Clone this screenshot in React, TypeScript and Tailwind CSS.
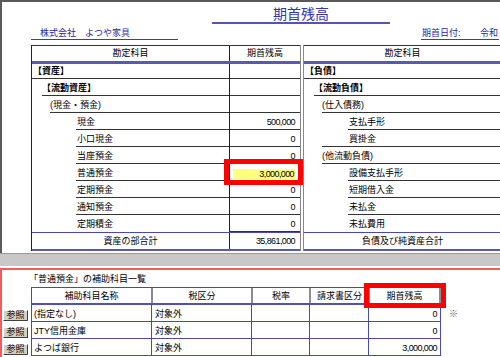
import React from "react";

type Line = { t: string; lvl: number; v?: string; bold?: boolean; hl?: boolean };

const assets: Line[] = [
    { t: "【資産】", lvl: 0, bold: true },
    { t: "【流動資産】", lvl: 1, bold: true },
    { t: "(現金・預金)", lvl: 2 },
    { t: "現金", lvl: 3, v: "500,000" },
    { t: "小口現金", lvl: 3, v: "0" },
    { t: "当座預金", lvl: 3, v: "0" },
    { t: "普通預金", lvl: 3, v: "3,000,000", hl: true },
    { t: "定期預金", lvl: 3, v: "0" },
    { t: "通知預金", lvl: 3, v: "0" },
    { t: "定期積金", lvl: 3, v: "0" },
];

const liabilities: Line[] = [
    { t: "【負債】", lvl: 0, bold: true },
    { t: "【流動負債】", lvl: 1, bold: true },
    { t: "(仕入債務)", lvl: 2 },
    { t: "支払手形", lvl: 3 },
    { t: "買掛金", lvl: 3 },
    { t: "(他流動負債)", lvl: 2 },
    { t: "設備支払手形", lvl: 3 },
    { t: "短期借入金", lvl: 3 },
    { t: "未払金", lvl: 3 },
    { t: "未払費用", lvl: 3 },
];

const textPad = ["pl-[1px]", "pl-[10px]", "pl-[18px]", "pl-[45px]"];
const linePad = ["ml-0", "ml-[10px]", "ml-[18px]", "ml-[44px]"];

const subRows = [
    { name: "(指定なし)", tax: "対象外", v: "0", mark: true },
    { name: "JTY信用金庫", tax: "対象外", v: "0" },
    { name: "よつば銀行", tax: "対象外", v: "3,000,000" },
];

const num = "font-['Liberation_Sans',sans-serif] tracking-[-0.6px]";

export default function App() {
    return (
        <div className="relative w-[500px] h-[357px] overflow-hidden bg-white text-black text-[9px] leading-[12px] font-['Liberation_Sans','Noto_Sans_CJK_JP',sans-serif]">
            <div className="h-[253px] border-l-2 border-t-2 border-[#5a5a5a] overflow-hidden">
                <div className="ml-[210px] mt-[3px] w-[178px] h-[19px] border-b-2 border-[#5454b4] text-center text-[14px] leading-[18px] text-[#3636a4]">
                    期首残高
                </div>

                <div className="flex mt-[3px] h-[13px] text-[#2828a0]">
                    <div className="ml-[29px] w-[147px] shrink-0 border-b border-[#3c3cb0] pl-[9px]">株式会社　よつや家具</div>
                    <div className="ml-[243px] w-[78px] shrink-0 flex border-b border-[#3c3cb0]">
                        <span className="w-[59px] shrink-0 pl-[1px]">期首日付:</span>
                        <span>令和</span>
                    </div>
                </div>

                <div className="flex mt-[5px] ml-[29px]">
                    <BalanceSide
                        rows={assets}
                        total="資産の部合計"
                        totalValue="35,861,000"
                        showAmount
                    />
                    <div className="w-[2px] shrink-0" />
                    <BalanceSide rows={liabilities} total="負債及び純資産合計" />
                </div>
            </div>

            <div className="h-[13px] bg-[#c8c8c8] border-t border-[#9a9a9a]" />

            <div className="mt-[2px] h-[89px] border-t-2 border-l-2 border-[#f25c5c]">
                <div className="mt-[3px] h-[12px] pl-[27px]">「普通預金」の補助科目一覧</div>
                <div className="mt-[2px] flex flex-col">
                    <div className="flex h-[18px]">
                        <div className="w-[29px] shrink-0" />
                        <div className="flex border-t border-b-2 border-[#4a4aa8] border-b-[#5050b8]">
                            <HeadCell w="w-[120px]" first>補助科目名称</HeadCell>
                            <HeadCell w="w-[100px]">税区分</HeadCell>
                            <HeadCell w="w-[58px]">税率</HeadCell>
                            <HeadCell w="w-[59px]">請求書区分</HeadCell>
                            <HeadCell w="w-[73px]" last>期首残高</HeadCell>
                        </div>
                    </div>
                    {subRows.map((r, i) => (
                        <div key={i} className="flex h-[17px]">
                            <div className="w-[29px] shrink-0 pl-[1px] pt-[5px]">
                                <div className="w-[25px] h-[11px] bg-[#d4d0c8] border border-t-white border-l-white border-b-[#404040] border-r-[#404040] text-center text-[9px] leading-[9px]">
                                    参照
                                </div>
                            </div>
                            <div className="flex border-b border-[#4a4aa8]">
                                <div className="w-[120px] border-l border-[#4a4aa8] pl-[2px] pt-[3px]">{r.name}</div>
                                <div className="w-[100px] border-l border-[#4a4aa8] pl-[3px] pt-[3px]">{r.tax}</div>
                                <div className="w-[58px] border-l border-[#4a4aa8]" />
                                <div className="w-[59px] border-l border-[#4a4aa8]" />
                                <div className={"w-[73px] border-x border-[#4a4aa8] pr-[3px] pt-[3px] text-right " + num}>{r.v}</div>
                            </div>
                            {r.mark && <div className="pl-[8px] pt-[3px] text-[#555]">※</div>}
                        </div>
                    ))}
                </div>
            </div>

            <div className="absolute left-[224px] top-[159px] w-[79px] h-[26px] border-[5px] border-[#ff0000]" />
            <div className="absolute left-[364px] top-[283px] w-[82px] h-[25px] border-[5px] border-[#ff0000]" />
        </div>
    );
}

function HeadCell({ children, w, first, last }: { children: React.ReactNode; w: string; first?: boolean; last?: boolean }) {
    return (
        <div
            className={
                "text-center pt-[2px] " +
                w +
                (first ? " border-l border-[#4a4aa8]" : " border-l-2 border-l-[#8a8a9a]") +
                (last ? " border-r-2 border-r-[#8a8a9a]" : "")
            }
        >
            {children}
        </div>
    );
}

function BalanceSide({
    rows,
    total,
    totalValue,
    showAmount,
}: {
    rows: Line[];
    total: string;
    totalValue?: string;
    showAmount?: boolean;
}) {
    return (
        <div className={"flex flex-col shrink-0 border-l " + (showAmount ? "border-[#222] border-r border-r-[#888]" : "border-[#888]")}>
            <div className="flex h-[19px] border-t border-[#333] border-b-[3px] border-b-[#5858b8]">
                <div className="w-[198px] text-center pt-[1px] border-r border-[#222]">勘定科目</div>
                <div className="w-[70px] text-center pt-[1px]">{showAmount ? "期首残高" : ""}</div>
            </div>

            {rows.map((r, i) => {
                const next = rows[i + 1];
                const lineLvl = next ? Math.min(r.lvl, next.lvl) : 0;
                return (
                    <div key={i} className={"flex " + (i === 0 ? "h-[15px]" : "h-[17px]")}>
                        <div className="w-[198px] flex flex-col border-r border-[#222]">
                            <div className={"flex-1 flex items-end pb-[1px] " + textPad[r.lvl] + (r.bold ? " font-bold" : "")}>{r.t}</div>
                            {next ? <div className={"h-px bg-[#333] " + linePad[lineLvl]} /> : <div className="h-px" />}
                        </div>
                        <div className={"w-[70px] flex items-end justify-end pr-[5px] pb-[1px] border-b border-[#333] " + num}>
                            {showAmount && r.v ? (
                                r.hl ? <span className="bg-[#ffff80] w-[62px] text-right h-[10px] leading-[10px] pr-[1px]">{r.v}</span> : r.v
                            ) : null}
                        </div>
                    </div>
                );
            })}

            <div className="flex h-[19px] border-t border-[#4848b0] border-b-2 border-b-[#5858b8]">
                <div className="w-[198px] text-center pt-[2px] border-r border-[#222]">{total}</div>
                <div className={"w-[70px] text-right pr-[5px] pt-[2px] " + num}>{showAmount ? totalValue : ""}</div>
            </div>
        </div>
    );
}
